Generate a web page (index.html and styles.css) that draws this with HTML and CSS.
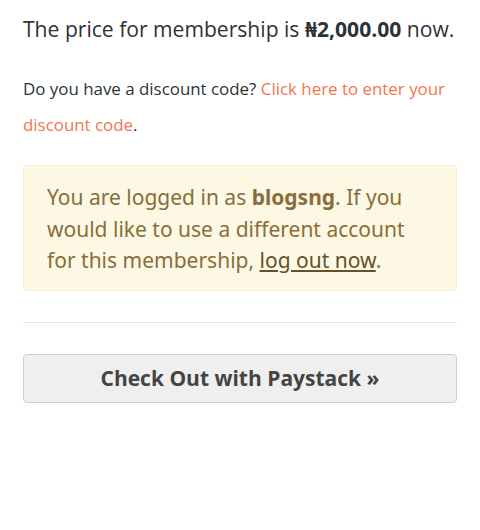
FILE: index.html
```html
<!DOCTYPE html>
<html>
<head>
<meta charset="utf-8">
<link rel="stylesheet" href="styles.css">
</head>
<body>
<div class="checkout">
  <p class="price">The price for membership is <strong>₦2,000.00</strong> now.</p>
  <p class="discount">Do you have a discount code? <a href="#">Click here to enter your discount code</a>.</p>
  <div class="alert">You are logged in as <strong>blogsng</strong>. If you would like to use a different account for this membership, <a href="#">log out now</a>.</div>
  <hr class="sep">
  <button class="pay">Check Out with Paystack &raquo;</button>
</div>
</body>
</html>
```
FILE: styles.css
```css
html, body { margin: 0; padding: 0; background: #fff; }
body { font-family: "Open Sans", "Noto Sans", sans-serif; color: #2c3338; }
.checkout { padding: 13px 23px 0 23px; display: flex; flex-direction: column; }
.price { margin: 0; font-size: 21.1px; line-height: 32px; }
.price strong { font-weight: 700; }
.discount { margin: 26px 0 0 0; font-size: 16.9px; line-height: 35.5px; }
.discount a { color: #f0774f; text-decoration: none; }
.alert {
  margin-top: 23px;
  background: #fcf8e3;
  border: 1px solid #faebcc;
  border-radius: 4px;
  color: #8a6d3b;
  font-family: "Noto Sans", sans-serif;
  font-size: 21px;
  line-height: 31.5px;
  padding: 16px 40px 13px 23px;
}
.alert strong { font-weight: 700; }
.alert a { color: #66512c; text-decoration: underline; }
.sep { margin: 31px 0 0 0; border: 0; border-top: 1px solid #e8e8e8; height: 0; }
.pay {
  margin-top: 31px;
  height: 49px;
  background: #efefef;
  border: 1px solid #cfcfcf;
  border-radius: 4px;
  color: #444;
  font-family: "Open Sans", sans-serif;
  font-weight: 700;
  font-size: 21px;
  cursor: pointer;
}
```
